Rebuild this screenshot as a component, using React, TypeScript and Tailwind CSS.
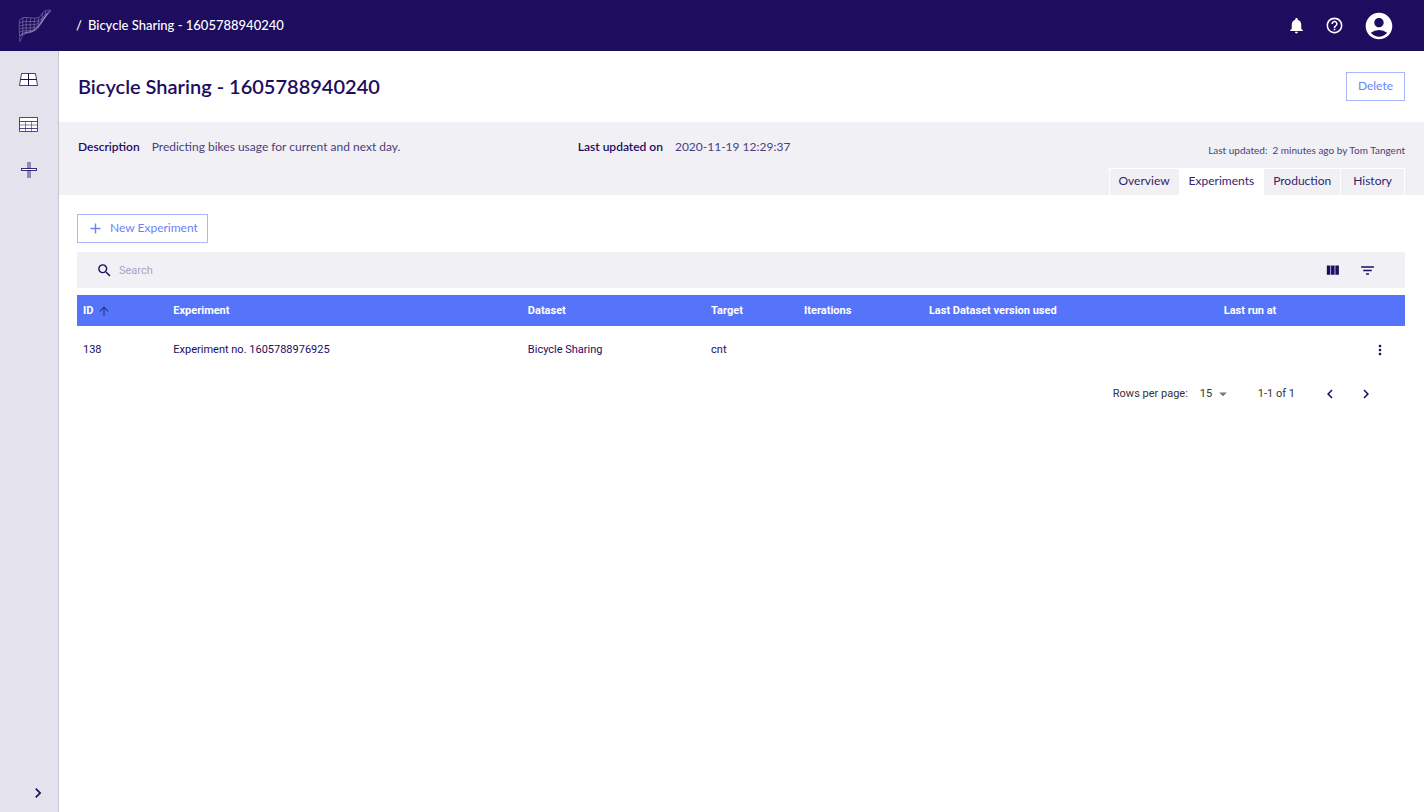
import { useState } from "react";
import {
  MdAccountCircle,
  MdAdd,
  MdArrowDropDown,
  MdArrowUpward,
  MdChevronLeft,
  MdChevronRight,
  MdFilterList,
  MdHelpOutline,
  MdMoreVert,
  MdNotifications,
  MdSearch,
} from "react-icons/md";

interface Experiment {
  id: number;
  name: string;
  dataset: string;
  target: string;
  iterations: string;
  datasetVersion: string;
  lastRun: string;
}

const tabs = ["Overview", "Experiments", "Production", "History"];

const columns = [
  { label: "ID", width: "w-[6.8%]", sorted: true },
  { label: "Experiment", width: "w-[26.7%]" },
  { label: "Dataset", width: "w-[13.8%]" },
  { label: "Target", width: "w-[7%]" },
  { label: "Iterations", width: "w-[9.4%]" },
  { label: "Last Dataset version used", width: "w-[22.2%]" },
  { label: "Last run at", width: "w-[10.3%]" },
];

const experiments: Experiment[] = [
  {
    id: 138,
    name: "Experiment no. 1605788976925",
    dataset: "Bicycle Sharing",
    target: "cnt",
    iterations: "",
    datasetVersion: "",
    lastRun: "",
  },
];

const Logo = () => (
  <svg width="34" height="34" viewBox="0 0 34 34" fill="none" stroke="#9a94c4" strokeWidth="0.5">
    <path d="M1.5 12 C2 10 3 9 6 8.5 C10 8 16 10 21 8.5 C24 6 24 3 28 1.5 C30 1 32 1 33 1.5 C30 4 28 7 25 11.5 C22 17 19 21 14 23 C9 24.5 6 24 4.5 27 C3 29 3 31 2 32.5 C1 30 2 28 1.5 24 C1 20 1 16 1.5 12Z" />
    <path d="M1.5 14 C8 11 14 13.5 20 12 C25 10 27 4 32.5 1.5" />
    <path d="M1.5 17 C7 14.5 13 17 19 15 C24 12.5 27 6 31.5 3" />
    <path d="M1.5 20 C6 18 13 20 18 18 C23 15 26 9 30 4.5" />
    <path d="M1.5 23 C5 21 12 22.5 16 20.5 C21 18 24 12 28 7" />
    <path d="M2 27 C4 23.5 9 23.5 14 22.5" strokeWidth="0.9" />
    <path d="M14 22.5 C20 20 22 15 25 11 L30 4.5" strokeWidth="0.9" />
    <path d="M5 9 C4 14 6 20 4 27 M9 8.5 C7 14 9 19 8 24 M13 9 C11 13 13 19 12 23 M17 9.5 C15 14 17 18 16 22 M21 8.5 C19 12 21 14 20 19 M24.5 4 C24 7 25 10 23 14.5 M27.5 2 C27 5 28 6 26 10" />
  </svg>
);

const ProjectsIcon = () => (
  <svg width="19" height="16" viewBox="0 0 19 16" fill="#fff" stroke="#1e0c5e">
    <path d="M2.5 1.5 H16.5 L18.5 13.5 H0.5Z" strokeOpacity="0.8" />
    <path d="M9.5 1.5 V13.5 M1.5 7.5 H17.5" />
  </svg>
);

const DatasetsIcon = () => (
  <svg width="19" height="16" viewBox="0 0 19 16" fill="#fff" stroke="#1e0c5e" strokeOpacity="0.75">
    <path d="M0.5 0.5 H18.5 V14.5 H0.5Z" />
    <path d="M0.5 4.5 H18.5 M0.5 11.5 H18.5" />
    <path d="M0.5 8 H18.5 M6.5 4.5 V14.5 M12.5 4.5 V14.5" strokeOpacity="0.5" />
  </svg>
);

const CreateIcon = () => (
  <svg width="19" height="18" viewBox="0 0 19 18">
    <path d="M8 1 H12 V17 H8Z" fill="#9189b9" />
    <path d="M2 7 H18 V10 H2Z" fill="#1e0c5e" fillOpacity="0.85" />
    <path d="M3 8 H17 V9 H3Z" fill="#fff" />
  </svg>
);

const ColumnsIcon = () => (
  <svg width="17" height="17" viewBox="0 0 24 24" fill="currentColor">
    <path d="M10 18h5V5h-5v13zm-6 0h5V5H4v13zM16 5v13h5V5h-5z" />
  </svg>
);

const sideLinks = [
  { label: "Projects", icon: ProjectsIcon },
  { label: "Datasets", icon: DatasetsIcon },
  { label: "Create", icon: CreateIcon },
];

const TopBar = () => (
  <header className="flex h-[51px] shrink-0 items-center justify-between bg-[#1e0c5e] pl-[18px] pr-[29px] text-white">
    <div className="flex items-center gap-6">
      <a href="#" aria-label="Home">
        <Logo />
      </a>
      <nav className="flex gap-[6px] pb-[1px] text-[13px] leading-5 font-medium">
        <span>/</span>
        <a href="#">Bicycle Sharing - 1605788940240</a>
      </nav>
    </div>
    <div className="flex items-center gap-[19px]">
      <button aria-label="Notifications">
        <MdNotifications size={19} />
      </button>
      <button aria-label="Help">
        <MdHelpOutline size={19} />
      </button>
      <button aria-label="Account">
        <MdAccountCircle size={32} />
      </button>
    </div>
  </header>
);

const Sidebar = () => (
  <aside className="flex w-[59px] shrink-0 flex-col justify-between border-r border-[#c8c6d3] bg-[#e4e3ed] pt-5 pb-[9px]">
    <nav className="flex flex-col items-start gap-[27px] pl-[19px]">
      {sideLinks.map(({ label, icon: Icon }) => (
        <a key={label} href="#" aria-label={label} className="flex h-[18px] items-center">
          <Icon />
        </a>
      ))}
    </nav>
    <button aria-label="Expand menu" className="mr-[10px] self-end">
      <MdChevronRight size={20} />
    </button>
  </aside>
);

const ProjectInfo = () => {
  const [active, setActive] = useState("Experiments");

  return (
    <section className="flex items-end justify-between bg-[#f1f0f5] px-[19px] text-[12px] leading-4">
      <dl className="flex flex-1 self-start pt-[17px]">
        <div className="flex w-[48.5%] gap-3">
          <dt className="font-semibold">Description</dt>
          <dd className="text-[#4b3d7e]">Predicting bikes usage for current and next day.</dd>
        </div>
        <div className="flex gap-3">
          <dt className="font-semibold">Last updated on</dt>
          <dd className="text-[#4b3d7e]">2020-11-19 12:29:37</dd>
        </div>
      </dl>
      <div className="pt-5">
        <p className="text-right text-[10px] text-[#4b3d7e]">
          Last updated:&nbsp; 2 minutes ago by Tom Tangent
        </p>
        <div role="tablist" className="mt-[10px] flex border-t border-r border-white">
          {tabs.map((tab) => (
            <button
              key={tab}
              role="tab"
              aria-selected={tab === active}
              onClick={() => setActive(tab)}
              className={`h-[26px] border-l border-white px-[9px] pb-[2px] text-[#34256b] last:px-3 ${
                tab === active ? "bg-white" : ""
              }`}
            >
              {tab}
            </button>
          ))}
        </div>
      </div>
    </section>
  );
};

const Toolbar = () => (
  <div className="mt-[9px] flex h-9 items-center justify-between bg-[#f1f0f5] pr-[29px] pl-[19px] font-[Roboto,sans-serif]">
    <label className="flex items-center gap-[6px]">
      <MdSearch size={17} />
      <input
        type="text"
        aria-label="Search"
        placeholder="Search"
        className="w-60 bg-transparent pt-[2px] text-[11px] leading-4 outline-none placeholder:text-[#aaa4c4]"
      />
    </label>
    <div className="flex items-center gap-[18px]">
      <button aria-label="Show columns">
        <ColumnsIcon />
      </button>
      <button aria-label="Filter">
        <MdFilterList size={17} />
      </button>
    </div>
  </div>
);

const ExperimentsTable = () => (
  <table className="mt-[7px] w-full table-fixed text-left font-[Roboto,sans-serif] text-[11px] leading-4">
    <thead className="bg-[#5574f9] text-white">
      <tr className="h-[31px]">
        {columns.map((col) => (
          <th key={col.label} className={`pl-[6px] font-bold ${col.width}`}>
            <span className="flex items-center gap-1">
              {col.label}
              {col.sorted && <MdArrowUpward size={14} className="text-[#29387d]" />}
            </span>
          </th>
        ))}
        <th aria-label="Actions" />
      </tr>
    </thead>
    <tbody>
      {experiments.map((exp) => (
        <tr key={exp.id} className="h-12">
          <td className="pl-[6px]">{exp.id}</td>
          <td className="pl-[6px]">{exp.name}</td>
          <td className="pl-[6px]">{exp.dataset}</td>
          <td className="pl-[6px]">{exp.target}</td>
          <td className="pl-[6px]">{exp.iterations}</td>
          <td className="pl-[6px]">{exp.datasetVersion}</td>
          <td className="pl-[6px]">{exp.lastRun}</td>
          <td className="pr-[17px] text-right">
            <button aria-label="More" className="align-middle">
              <MdMoreVert size={16} />
            </button>
          </td>
        </tr>
      ))}
    </tbody>
  </table>
);

const Pagination = () => (
  <div className="flex h-10 items-center justify-end pr-[30px] font-[Roboto,sans-serif] text-[11px] leading-4 text-[#333]">
    <label htmlFor="rows">Rows per page:</label>
    <div className="relative ml-3">
      <select id="rows" defaultValue="15" className="w-8 appearance-none bg-transparent outline-none">
        <option>15</option>
        <option>30</option>
        <option>50</option>
      </select>
      <MdArrowDropDown size={18} className="pointer-events-none absolute -top-px right-0 text-[#757575]" />
    </div>
    <span className="ml-[26px]">1-1 of 1</span>
    <button aria-label="Previous page" className="ml-[26px] text-[#1e0c5e]">
      <MdChevronLeft size={18} />
    </button>
    <button aria-label="Next page" className="ml-[18px] text-[#1e0c5e]">
      <MdChevronRight size={18} />
    </button>
  </div>
);

export default function App() {
  return (
    <div className="flex min-h-screen flex-col bg-white font-[Lato,sans-serif] text-[#1e0c5e]">
      <TopBar />
      <div className="flex flex-1">
        <Sidebar />
        <main className="min-w-0 flex-1">
          <div className="flex h-[71px] items-center justify-between px-[19px]">
            <h1 className="pb-[2px] text-[20px] leading-7 font-semibold">Bicycle Sharing - 1605788940240</h1>
            <button className="h-[29px] border border-[#a9b8fc] px-[11px] pb-[1px] text-[12px] leading-4 text-[#6b83fa]">
              Delete
            </button>
          </div>
          <ProjectInfo />
          <div className="pt-[19px] pr-[19px] pl-[18px]">
            <button className="flex h-[29px] items-center gap-[6px] border border-[#a9b8fc] px-[9px] pb-[1px] text-[12px] leading-4 text-[#6b83fa]">
              <MdAdd size={17} />
              New Experiment
            </button>
            <Toolbar />
            <ExperimentsTable />
            <Pagination />
          </div>
        </main>
      </div>
    </div>
  );
}
